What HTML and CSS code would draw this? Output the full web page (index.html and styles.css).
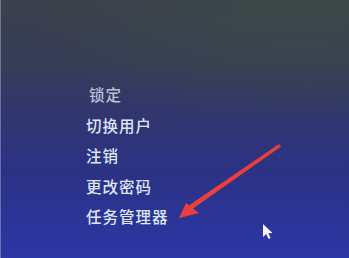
FILE: index.html
```html
<!DOCTYPE html>
<html lang="zh-CN">
<head>
<meta charset="utf-8">
<link rel="stylesheet" href="styles.css">
</head>
<body>
<div class="screen">
  <ul class="menu">
    <li class="item dim">锁定</li>
    <li class="item">切换用户</li>
    <li class="item">注销</li>
    <li class="item">更改密码</li>
    <li class="item">任务管理器</li>
  </ul>
  <svg class="overlay" width="349" height="258" viewBox="0 0 349 258">
    <polygon points="279,144 281,146.5 191,210 188,206" fill="#e8403a"/>
    <polygon points="179,218 186,203 199,213" fill="#e8403a"/>
    <path d="M263 224 L263 237 L266.2 234 L268.6 239 L270.6 238 L268.3 233.2 L272.5 233 Z" fill="#f2f4ff"/>
  </svg>
</div>
</body>
</html>
```
FILE: styles.css
```css
html, body {
  margin: 0;
  padding: 0;
}
body {
  width: 349px;
  height: 258px;
  overflow: hidden;
}
.screen {
  position: relative;
  width: 349px;
  height: 258px;
  background:
    radial-gradient(ellipse 260px 110px at 300px 20px, rgba(62, 80, 66, 0.5), rgba(62, 80, 66, 0) 100%),
    linear-gradient(180deg, #3b414b 0%, #373d58 25%, #30356f 45%, #2b3288 70%, #2b37a6 100%);
  font-family: "Noto Sans CJK SC", "Noto Sans", sans-serif;
  box-shadow: inset 1px 0 0 rgba(220, 225, 240, 0.35);
}
.menu {
  list-style: none;
  margin: 0;
  padding: 79px 0 0 86px;
  display: flex;
  flex-direction: column;
}
.item {
  color: #dfe6f6;
  font-size: 15.5px;
  font-weight: 500;
  line-height: 30.5px;
  height: 30.5px;
  letter-spacing: 1px;
}
.item.dim {
  color: #b9c0d6;
  padding-left: 3px;
}
.overlay {
  position: absolute;
  left: 0;
  top: 0;
}
```
